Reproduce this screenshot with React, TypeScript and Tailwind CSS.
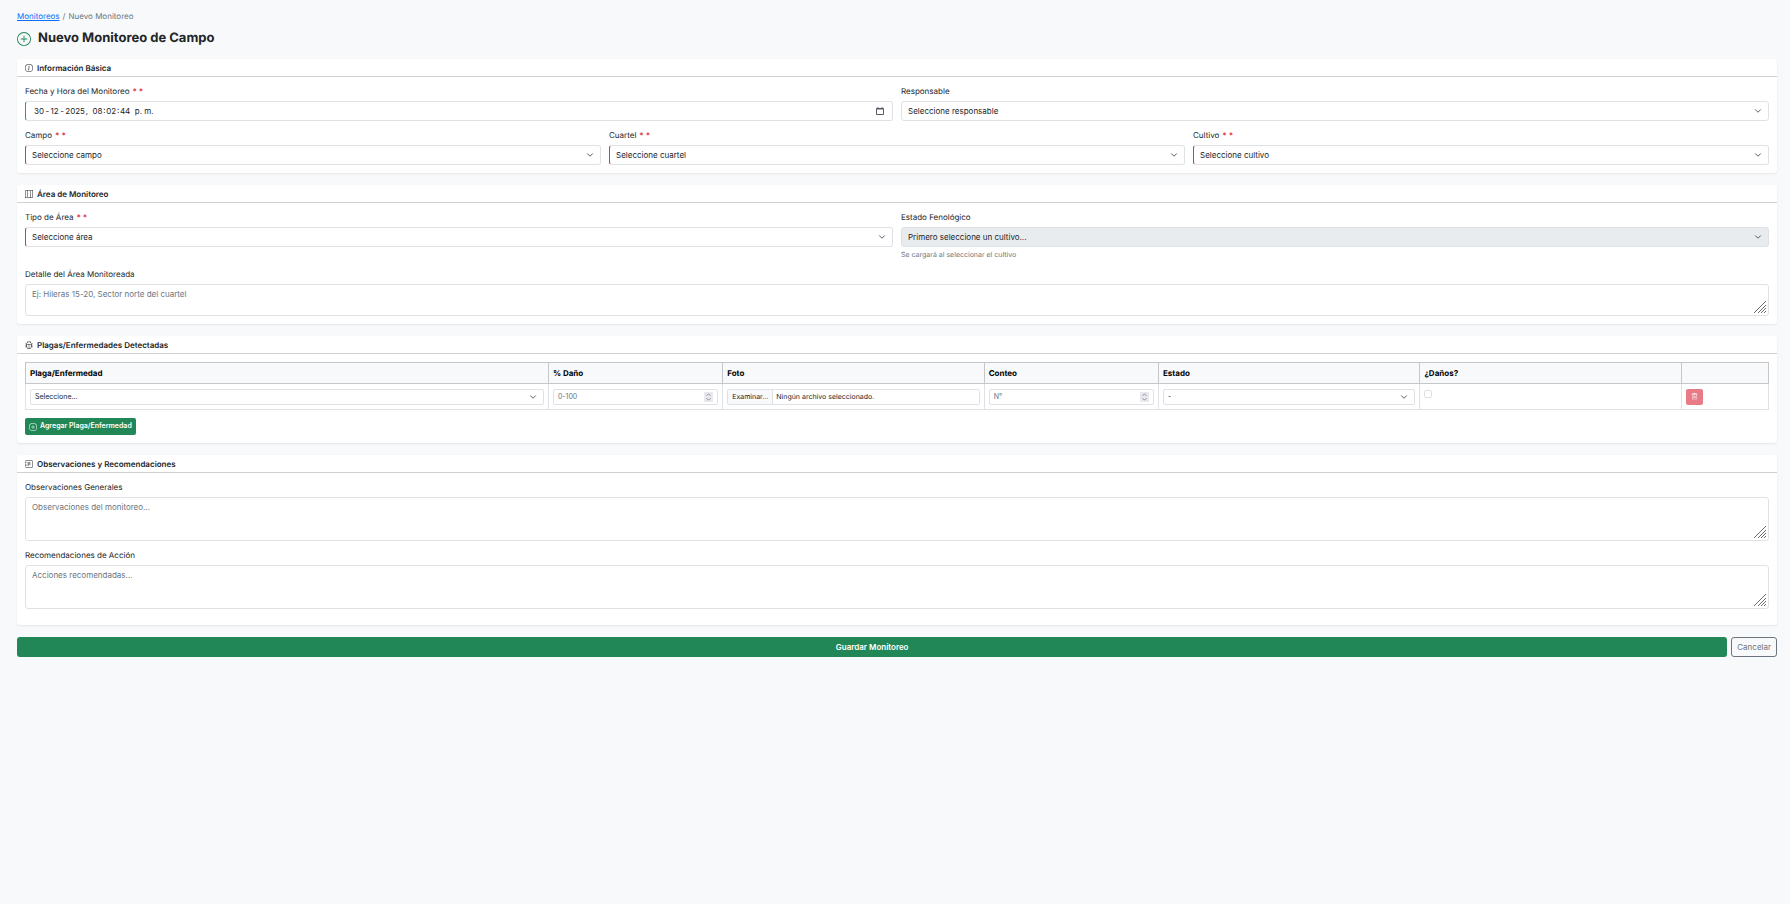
import type { ComponentProps, ReactNode } from 'react'
import { BsBug, BsInfoCircle, BsJournalText, BsMap, BsPlusCircle, BsTrash } from 'react-icons/bs'

const control = 'w-full rounded-[3px] border border-[#dee2e6] bg-white text-[8px] leading-3 text-[#212529] placeholder:text-[#6c757d]'
const smallControl = 'w-full h-4 rounded-[2px] border border-[#dee2e6] bg-white text-[7px] leading-3 text-[#212529] placeholder:text-[#6c757d]'

const Chevron = ({ className = '' }: { className?: string }) => (
    <svg viewBox="0 0 16 16" className={`pointer-events-none absolute right-[7px] size-2 ${className}`} fill="none" stroke="#343a40" strokeWidth="1.6" strokeLinecap="round" strokeLinejoin="round">
        <path d="m3 5.5 5 5 5-5" />
    </svg>
)

const Card = ({ icon, title, children }: { icon: ReactNode; title: string; children: ReactNode }) => (
    <section className="mb-3 rounded-[3px] bg-white shadow-[0_1px_2px_rgba(0,0,0,0.08)]">
        <h2 className="flex h-[18px] items-center gap-1 border-b border-[#cfd1d3] px-2 text-[8px] font-semibold">
            {icon}
            {title}
        </h2>
        <div className="p-2">{children}</div>
    </section>
)

const Label = ({ id, required, children }: { id: string; required?: boolean; children: ReactNode }) => (
    <label htmlFor={id} className="mb-1 flex h-3 gap-[3px] text-[8px] leading-3">
        {children}
        {required && <span className="font-bold text-[#dc3545]">* *</span>}
    </label>
)

type SelectFieldProps = { id: string; label: string; text: string; required?: boolean; disabled?: boolean }

const SelectField = ({ id, label, text, required, disabled }: SelectFieldProps) => (
    <div>
        <Label id={id} required={required}>{label}</Label>
        <div className="relative">
            <select
                id={id}
                disabled={disabled}
                className={`${control} block h-5 appearance-none px-1.5 disabled:bg-[#e9ecef] disabled:opacity-100 ${required ? 'border-l-[#dc3545]' : ''}`}
            >
                <option>{text}</option>
            </select>
            <Chevron className="top-1.5" />
        </div>
    </div>
)

const TextArea = ({ id, className = '', ...props }: ComponentProps<'textarea'>) => (
    <div className="relative">
        <textarea id={id} className={`${control} block resize-none px-1.5 py-[3px] ${className}`} {...props} />
        <svg viewBox="0 0 14 14" className="pointer-events-none absolute right-0.5 bottom-0.5 size-3.5" stroke="#6b6b6b" strokeWidth="1">
            <path d="M1 13 13 1M5 13l8-8M8 13l5-5M11 13l2-2" />
        </svg>
    </div>
)

const Spinner = () => (
    <svg viewBox="0 0 9 10" className="pointer-events-none absolute top-[3px] right-[5px] h-2.5 w-[9px]" fill="none" stroke="#8f8f9d">
        <rect width="9" height="10" fill="#e9e9ed" stroke="none" />
        <path d="m2.5 3.8 2-2 2 2M2.5 6.2l2 2 2-2" />
    </svg>
)

const NumberCell = ({ label, placeholder }: { label: string; placeholder: string }) => (
    <div className="relative">
        <input
            type="number"
            aria-label={label}
            placeholder={placeholder}
            className={`${smallControl} block appearance-none px-1 [&::-webkit-inner-spin-button]:appearance-none`}
        />
        <Spinner />
    </div>
)

const SelectCell = ({ label, text }: { label: string; text: string }) => (
    <div className="relative">
        <select aria-label={label} className={`${smallControl} block appearance-none px-1`}>
            <option>{text}</option>
        </select>
        <Chevron className="top-1" />
    </div>
)

const columns = [
    { title: 'Plaga/Enfermedad', width: 'w-[30%]' },
    { title: '% Daño', width: 'w-[10%]' },
    { title: 'Foto', width: 'w-[15%]' },
    { title: 'Conteo', width: 'w-[10%]' },
    { title: 'Estado', width: 'w-[15%]' },
    { title: '¿Daños?', width: 'w-[15%]' },
    { title: '', width: 'w-[5%]' },
]

const PestTable = () => (
    <table className="w-full table-fixed border-collapse text-left text-[8px]">
        <thead>
            <tr className="h-[21px] bg-[#f8f9fa] text-black">
                {columns.map(({ title, width }) => (
                    <th key={title} className={`border border-[#c6c7c8] px-1 font-bold ${width}`}>{title}</th>
                ))}
            </tr>
        </thead>
        <tbody>
            <tr className="h-[26px] [&>td]:border [&>td]:border-[#dee2e6] [&>td]:px-1">
                <td><SelectCell label="Plaga/Enfermedad" text="Seleccione..." /></td>
                <td><NumberCell label="% Daño" placeholder="0-100" /></td>
                <td>
                    <label className={`${smallControl} flex cursor-pointer items-center overflow-hidden`}>
                        <span className="flex h-full items-center border-r border-[#dee2e6] bg-[#f8f9fa] px-1">Examinar...</span>
                        <span className="px-[3px]">Ningún archivo seleccionado.</span>
                        <input type="file" aria-label="Foto" className="sr-only" />
                    </label>
                </td>
                <td><NumberCell label="Conteo" placeholder="N°" /></td>
                <td><SelectCell label="Estado" text="-" /></td>
                <td className="pt-1 align-top">
                    <input type="checkbox" aria-label="¿Daños?" className="mt-0.5 block size-2 appearance-none rounded-[2px] border border-[#dee2e6] bg-white checked:bg-[#0d6efd]" />
                </td>
                <td>
                    <button type="button" disabled aria-label="Eliminar" className="flex h-4 w-[17px] items-center justify-center rounded-[2px] bg-[#dc3545] text-white opacity-65">
                        <BsTrash className="size-[7px]" />
                    </button>
                </td>
            </tr>
        </tbody>
    </table>
)

const App = () => {
    return (
        <main className="min-h-screen bg-[#f8f9fa] pt-2.5 pr-[13px] pl-[17px] font-[Inter,sans-serif] text-[#212529] [text-rendering:geometricPrecision]">
            <nav aria-label="breadcrumb" className="flex gap-[3px] text-[8px] leading-3 text-[#6c757d]">
                <a href="#" className="text-[#0d6efd] underline">Monitoreos</a>
                <span>/</span>
                <span>Nuevo Monitoreo</span>
            </nav>

            <h1 className="mt-2 mb-3 flex h-[17px] items-center gap-[7px] text-[13px] leading-[17px] font-bold">
                <BsPlusCircle className="size-3.5 text-[#218756]" />
                Nuevo Monitoreo de Campo
            </h1>

            <form>
                <Card icon={<BsInfoCircle className="size-2" />} title="Información Básica">
                    <div className="grid grid-cols-2 gap-2">
                        <div>
                            <Label id="fecha" required>Fecha y Hora del Monitoreo</Label>
                            <div className={`${control} flex h-5 items-center border-l-[#28a745] px-2`}>
                                <input id="fecha" type="text" className="min-w-0 flex-1 outline-none" defaultValue={'30\u2009-\u200912\u2009-\u20092025\u200a,  08\u200a:\u200a02\u200a:\u200a44  p. m.'} />
                                <button type="button" aria-label="Abrir calendario">
                                    <svg viewBox="0 0 8 8" className="size-2" fill="none" stroke="#5b5b66">
                                        <path d="M.5 1.5h7v6h-7zM.5 2h7M2 0v2M6 0v2" />
                                    </svg>
                                </button>
                            </div>
                        </div>
                        <SelectField id="responsable" label="Responsable" text="Seleccione responsable" />
                    </div>
                    <div className="mt-2 grid grid-cols-3 gap-2">
                        <SelectField id="campo" label="Campo" text="Seleccione campo" required />
                        <SelectField id="cuartel" label="Cuartel" text="Seleccione cuartel" required />
                        <SelectField id="cultivo" label="Cultivo" text="Seleccione cultivo" required />
                    </div>
                </Card>

                <Card icon={<BsMap className="size-2" />} title="Área de Monitoreo">
                    <div className="grid grid-cols-2 gap-2">
                        <SelectField id="tipo" label="Tipo de Área" text="Seleccione área" required />
                        <div>
                            <SelectField id="estado" label="Estado Fenológico" text="Primero seleccione un cultivo..." disabled />
                            <p className="mt-0.5 text-[7px] leading-[11px] text-[#6c757d]">Se cargará al seleccionar el cultivo</p>
                        </div>
                    </div>
                    <div className="mt-2">
                        <Label id="detalle">Detalle del Área Monitoreada</Label>
                        <TextArea id="detalle" className="h-8" placeholder="Ej: Hileras 15-20, Sector norte del cuartel" />
                    </div>
                </Card>

                <Card icon={<BsBug className="size-2" />} title="Plagas/Enfermedades Detectadas">
                    <PestTable />
                    <button type="button" className="mt-2 flex h-[17px] items-center gap-[3px] rounded-[2px] bg-[#218756] px-1 text-[7px] font-semibold text-white">
                        <BsPlusCircle className="size-2" />
                        Agregar Plaga/Enfermedad
                    </button>
                </Card>

                <Card icon={<BsJournalText className="size-2" />} title="Observaciones y Recomendaciones">
                    <Label id="observaciones">Observaciones Generales</Label>
                    <TextArea id="observaciones" className="h-11" placeholder="Observaciones del monitoreo..." />
                    <div className="my-2">
                        <Label id="recomendaciones">Recomendaciones de Acción</Label>
                        <TextArea id="recomendaciones" className="h-11" placeholder="Acciones recomendadas..." />
                    </div>
                </Card>

                <div className="flex gap-1 text-[8px]">
                    <button type="submit" className="h-5 flex-1 rounded-[3px] bg-[#218756] font-semibold text-white">Guardar Monitoreo</button>
                    <button type="button" className="h-5 rounded-[3px] border border-[#6c757d] px-[5px] text-[#6c757d]">Cancelar</button>
                </div>
            </form>
        </main>
    )
}

export default App
